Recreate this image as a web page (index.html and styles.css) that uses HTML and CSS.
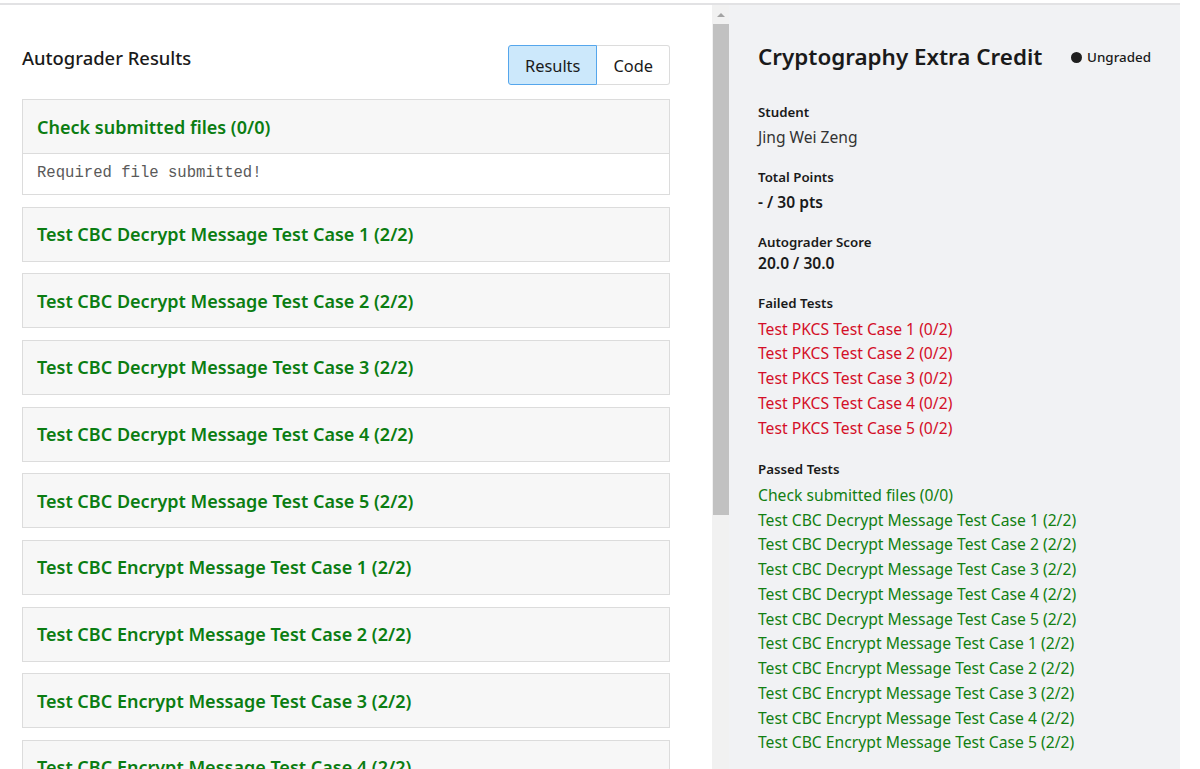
FILE: index.html
```html
<!DOCTYPE html>
<html lang="en">
<head>
    <meta charset="UTF-8">
    <meta name="viewport" content="width=device-width, initial-scale=1.0">
    <title>Cryptography Extra Credit</title>
    <link rel="stylesheet" href="styles.css">
</head>
<body>
    <div class="page">
        <main class="results-pane">
            <div class="results-header">
                <h2>Autograder Results</h2>
                <div class="toggle">
                    <button class="toggle-btn active">Results</button>
                    <button class="toggle-btn">Code</button>
                </div>
            </div>

            <div class="test-card">
                <div class="test-title">Check submitted files (0/0)</div>
                <pre class="test-output">Required file submitted!</pre>
            </div>
            <div class="test-card"><div class="test-title">Test CBC Decrypt Message Test Case 1 (2/2)</div></div>
            <div class="test-card"><div class="test-title">Test CBC Decrypt Message Test Case 2 (2/2)</div></div>
            <div class="test-card"><div class="test-title">Test CBC Decrypt Message Test Case 3 (2/2)</div></div>
            <div class="test-card"><div class="test-title">Test CBC Decrypt Message Test Case 4 (2/2)</div></div>
            <div class="test-card"><div class="test-title">Test CBC Decrypt Message Test Case 5 (2/2)</div></div>
            <div class="test-card"><div class="test-title">Test CBC Encrypt Message Test Case 1 (2/2)</div></div>
            <div class="test-card"><div class="test-title">Test CBC Encrypt Message Test Case 2 (2/2)</div></div>
            <div class="test-card"><div class="test-title">Test CBC Encrypt Message Test Case 3 (2/2)</div></div>
            <div class="test-card"><div class="test-title">Test CBC Encrypt Message Test Case 4 (2/2)</div></div>
        </main>

        <!-- fake scrollbar of the results pane -->
        <div class="scrollbar">
            <div class="scroll-arrow"></div>
            <div class="scroll-thumb"></div>
        </div>

        <aside class="summary">
            <div class="summary-head">
                <h1>Cryptography Extra Credit</h1>
                <span class="status"><span class="status-dot"></span>Ungraded</span>
            </div>

            <section class="field">
                <div class="field-label">Student</div>
                <div class="field-value">Jing Wei Zeng</div>
            </section>
            <section class="field">
                <div class="field-label">Total Points</div>
                <div class="field-value strong">- / 30 pts</div>
            </section>
            <section class="field tight">
                <div class="field-label">Autograder Score</div>
                <div class="field-value strong">20.0 / 30.0</div>
            </section>

            <section class="field tests">
                <div class="field-label">Failed Tests</div>
                <ul class="test-list failed">
                    <li>Test PKCS Test Case 1 (0/2)</li>
                    <li>Test PKCS Test Case 2 (0/2)</li>
                    <li>Test PKCS Test Case 3 (0/2)</li>
                    <li>Test PKCS Test Case 4 (0/2)</li>
                    <li>Test PKCS Test Case 5 (0/2)</li>
                </ul>
            </section>

            <section class="field tests">
                <div class="field-label">Passed Tests</div>
                <ul class="test-list passed">
                    <li>Check submitted files (0/0)</li>
                    <li>Test CBC Decrypt Message Test Case 1 (2/2)</li>
                    <li>Test CBC Decrypt Message Test Case 2 (2/2)</li>
                    <li>Test CBC Decrypt Message Test Case 3 (2/2)</li>
                    <li>Test CBC Decrypt Message Test Case 4 (2/2)</li>
                    <li>Test CBC Decrypt Message Test Case 5 (2/2)</li>
                    <li>Test CBC Encrypt Message Test Case 1 (2/2)</li>
                    <li>Test CBC Encrypt Message Test Case 2 (2/2)</li>
                    <li>Test CBC Encrypt Message Test Case 3 (2/2)</li>
                    <li>Test CBC Encrypt Message Test Case 4 (2/2)</li>
                    <li>Test CBC Encrypt Message Test Case 5 (2/2)</li>
                </ul>
            </section>
        </aside>
    </div>
</body>
</html>
```

FILE: styles.css
```css
body {
    font-family: "Noto Sans", "Open Sans", sans-serif;
    margin: 0;
    padding-top: 3px;
    background-color: #ffffff;
    color: #1a1a1a;
    overflow: hidden;
}

.page {
    display: flex;
    height: 764px;
    width: 1180px;
    border-top: 2px solid #e2e2e4;
    overflow: hidden;
}

/* left: autograder results */
.results-pane {
    width: 648px;
    padding: 0 42px 0 22px;
    flex-shrink: 0;
    background: #ffffff;
}

.results-header {
    display: flex;
    justify-content: space-between;
    align-items: flex-start;
    padding-top: 40px;
    margin-bottom: 14px;
}

.results-header h2 {
    margin: 0;
    font-size: 18.4px;
    line-height: 26px;
    font-weight: 500;
    color: #1a1a1a;
}

.toggle {
    display: flex;
}

.toggle-btn {
    font-family: inherit;
    font-size: 16.4px;
    height: 40px;
    padding: 0 16px;
    border: 1px solid #dcdcdc;
    background: #ffffff;
    color: #1a1a1a;
    cursor: pointer;
}

.toggle-btn:first-child {
    border-radius: 3px 0 0 3px;
}

.toggle-btn:last-child {
    border-left: none;
    border-radius: 0 3px 3px 0;
}

.toggle-btn.active {
    background: #cce8fb;
    border-color: #55a6ec;
}

.test-card {
    border: 1px solid #dcdcdc;
    margin-bottom: 11.67px;
    background: #ffffff;
}

.test-title {
    height: 53px;
    display: flex;
    align-items: center;
    padding: 0 14px;
    background: #f7f7f7;
    color: #0b7d12;
    font-size: 18px;
    font-weight: 600;
}

.test-output {
    margin: 0;
    height: 40px;
    line-height: 38px;
    padding: 0 14px;
    border-top: 1px solid #dcdcdc;
    font-family: "Liberation Mono", monospace;
    font-size: 15.6px;
    color: #5a5a5a;
}

/* scrollbar drawn between panes */
.scrollbar {
    width: 17px;
    flex-shrink: 0;
    background: #f1f1f1;
    display: flex;
    flex-direction: column;
    align-items: flex-end;
}

.scroll-arrow {
    width: 0;
    height: 0;
    margin: 8px 4px 7px 0;
    border-left: 4px solid transparent;
    border-right: 4px solid transparent;
    border-bottom: 4px solid #a3a3a3;
}

.scroll-thumb {
    width: 16px;
    height: 491px;
    background: #c1c1c1;
}

/* right: summary */
.summary {
    flex: 1;
    background: #f1f2f4;
    padding: 37px 29px 0 29px;
}

.summary-head {
    display: flex;
    justify-content: space-between;
    align-items: center;
    margin-bottom: 30px;
}

.summary-head h1 {
    margin: 0;
    font-size: 22.4px;
    line-height: 30px;
    font-weight: 600;
    color: #1a1a1a;
}

.status {
    display: flex;
    align-items: center;
    gap: 5px;
    font-size: 13.4px;
    font-weight: 500;
    color: #1a1a1a;
}

.status-dot {
    width: 11px;
    height: 11px;
    border-radius: 50%;
    background: #1f1f1f;
}

.field {
    margin-bottom: 19px;
}

.field-label {
    font-size: 13.3px;
    font-weight: 600;
    line-height: 20px;
    margin-bottom: 4px;
    color: #1a1a1a;
}

.field.tight .field-label {
    margin-bottom: 0;
}

.field-value {
    font-size: 15.6px;
    line-height: 22px;
    color: #333;
}

.field-value.strong {
    font-weight: 600;
    color: #1a1a1a;
}

.field.tests .field-label {
    margin-bottom: 3.5px;
}

.test-list {
    list-style: none;
    margin: 0;
    padding: 0;
    font-size: 15.7px;
}

.test-list li {
    line-height: 24.75px;
}

.test-list.failed {
    color: #d40f28;
}

.test-list.passed {
    color: #127f12;
}
```
